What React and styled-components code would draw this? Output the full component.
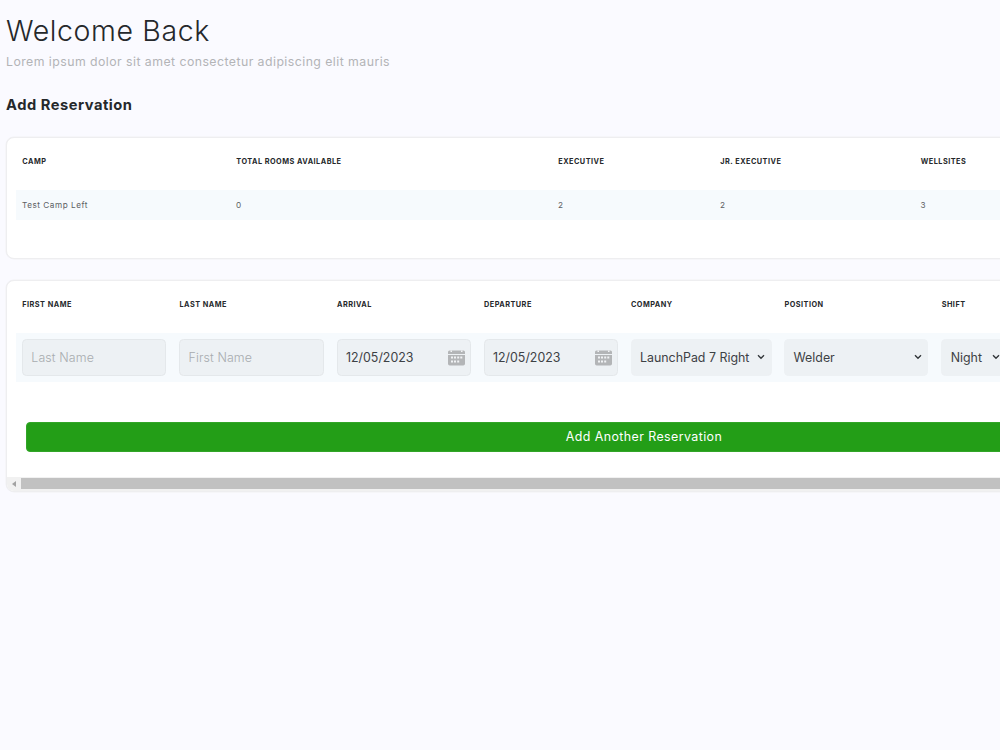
import React from "react";
import styled, { createGlobalStyle } from "styled-components";

const GlobalStyle = createGlobalStyle`
  * {
    box-sizing: border-box;
  }

  body {
    margin: 0;
    background: #fafaff;
    color: #25282b;
    font-family: Inter, "Liberation Sans", sans-serif;
    overflow: hidden;
  }
`;

const Page = styled.main`
  width: 1000px;
  height: 750px;
  padding: 12px 0 0 6px;
  overflow: hidden;
`;

const Title = styled.h1`
  margin: 0;
  font-size: 28.5px;
  line-height: 38px;
  font-weight: 330;
  letter-spacing: 0.6px;
  white-space: nowrap;
`;

const Subtitle = styled.p`
  margin: 0;
  padding-top: 2px;
  font-size: 12.3px;
  line-height: 20px;
  letter-spacing: 0.45px;
  color: #b3b4b7;
`;

const Heading = styled.h2`
  margin: 23px 0 0;
  font-size: 14.7px;
  line-height: 20px;
  font-weight: 680;
  letter-spacing: 0.52px;
`;

const Card = styled.section`
  width: 1276px;
  height: ${props => props.$height}px;
  margin-top: ${props => props.$top}px;
  padding: 0 8.5px;
  display: flex;
  flex-direction: column;
  background: #ffffff;
  border: 1.5px solid #eeeef0;
  border-radius: 8px;
  box-shadow: 0 0 0 0.5px #f1f1f4;
  overflow: hidden;
`;

const Row = styled.div`
  display: grid;
  flex: none;
  grid-template-columns: ${props => props.$columns};
  padding-left: 6.5px;
  align-items: center;
`;

const HeadRow = styled(Row)`
  height: 47px;
  margin-bottom: 5px;
  padding-left: 6.8px;
  font-size: 7.3px;
  font-weight: 700;
  letter-spacing: 0.48px;
  text-transform: uppercase;
  white-space: nowrap;
`;

const CampRow = styled(Row)`
  height: 30px;
  background: #f6fafd;
  font-size: 8.2px;
  letter-spacing: 0.52px;
  color: #5c5f63;
`;

const FormRow = styled(Row)`
  height: 49px;
  background: #f6fafd;
`;

const Field = styled.div`
  display: flex;
  align-items: center;
  justify-content: space-between;
  width: ${props => props.$width}px;
  height: 37px;
  padding: 0 ${props => props.$end || 5.5}px 0 8.3px;
  background: #edf1f4;
  border: 1px solid ${props => (props.$select ? "#edf1f4" : "#e4e8eb")};
  border-radius: 4.5px;
  font-size: 12.4px;
  font-weight: ${props => (props.$placeholder ? 300 : 380)};
  letter-spacing: ${props => (props.$placeholder ? 0.12 : 0)}px;
  color: ${props => (props.$placeholder ? "#a8acaf" : "#3d4145")};
  white-space: nowrap;
`;

const AddButton = styled.button`
  flex: none;
  width: 1237px;
  height: 30px;
  margin: 40px 0 0 10px;
  padding: 0 0 1px;
  border: 1px solid #32a528;
  border-radius: 4px;
  background: #239e17;
  color: #ffffff;
  font-family: inherit;
  font-size: 12.4px;
  letter-spacing: 0.43px;
`;

const ScrollBar = styled.div`
  flex: none;
  display: flex;
  align-items: center;
  height: 14px;
  margin: auto -8.5px 0;
  padding: 0 15px 1px 5px;
  gap: 5px;
  background: #f1f1f1;
`;

const ScrollArrow = styled.svg`
  flex: none;
  width: 4px;
  height: 6px;
  fill: #a2a2a2;
`;

const ScrollThumb = styled.div`
  flex: 1;
  height: 11px;
  background: #c1c1c1;
`;

const Icon = styled.svg`
  flex: none;
  display: block;
`;

const CalendarSvg = styled(Icon)`
  margin-top: 2px;
`;

const CalendarIcon = () => (
  <CalendarSvg width="17" height="16" viewBox="0 0 17 16">
    <path
      fill="#b3b5b7"
      d="M0 4V2Q0 .5 1.5.5H15.5Q17 .5 17 2V4zM0 5h17v8.7q0 1.8-1.8 1.8H1.8Q0 15.5 0 13.7z"
    />
    <path
      fill="#f1f3f5"
      d="M3 6.5h2v2H3zM6 6.5h2v2H6zM9.2 6.5h2v2h-2zM12.3 6.5h2v2h-2zM3 10.5h2v2H3zM6 10.5h2v2H6zM9.2 10.5h2v2h-2zM2.500.5h1.500V2H2.500zM13 .5h1.500V2H13z"
    />
  </CalendarSvg>
);

const Chevron = () => (
  <Icon width="8" height="6" viewBox="0 0 8 6">
    <path d="M1 1.2l3 3 3-3" fill="none" stroke="#34383b" strokeWidth="1.4" />
  </Icon>
);

const campColumns = "214px 322px 162px 200.5px 350px";
const formColumns = "157.2px 157.5px 147px 147px 153.5px 157.2px 330px";

const camp = [
  ["Camp", "Test Camp Left"],
  ["Total Rooms Available", "0"],
  ["Executive", "2"],
  ["Jr. Executive", "2"],
  ["Wellsites", "3"],
];

const formHeads = ["First Name", "Last Name", "Arrival", "Departure", "Company", "Position", "Shift"];

export default function App() {
  return (
    <Page>
      <GlobalStyle />
      <Title>Welcome Back</Title>
      <Subtitle>Lorem ipsum dolor sit amet consectetur adipiscing elit mauris</Subtitle>
      <Heading>Add Reservation</Heading>

      <Card $top={21.5} $height={122.5}>
        <HeadRow $columns={campColumns}>
          {camp.map(([head]) => (
            <span key={head}>{head}</span>
          ))}
        </HeadRow>
        <CampRow $columns={campColumns}>
          {camp.map(([head, value]) => (
            <span key={head}>{value}</span>
          ))}
        </CampRow>
      </Card>

      <Card $top={20.5} $height={212.5}>
        <HeadRow $columns={formColumns}>
          {formHeads.map(head => (
            <span key={head}>{head}</span>
          ))}
        </HeadRow>
        <FormRow $columns={formColumns}>
          <Field $width={144} $placeholder>Last Name</Field>
          <Field $width={145} $placeholder>First Name</Field>
          <Field $width={134.5}>
            12/05/2023
            <CalendarIcon />
          </Field>
          <Field $width={134.5}>
            12/05/2023
            <CalendarIcon />
          </Field>
          <Field $width={141} $select>
            LaunchPad 7 Right
            <Chevron />
          </Field>
          <Field $width={144} $select>
            Welder
            <Chevron />
          </Field>
          <Field $width={66} $select $end={6}>
            Night
            <Chevron />
          </Field>
        </FormRow>
        <AddButton>Add Another Reservation</AddButton>
        <ScrollBar>
          <ScrollArrow viewBox="0 0 4 6">
            <path d="M4 0v6L0 3z" />
          </ScrollArrow>
          <ScrollThumb />
        </ScrollBar>
      </Card>
    </Page>
  );
}
